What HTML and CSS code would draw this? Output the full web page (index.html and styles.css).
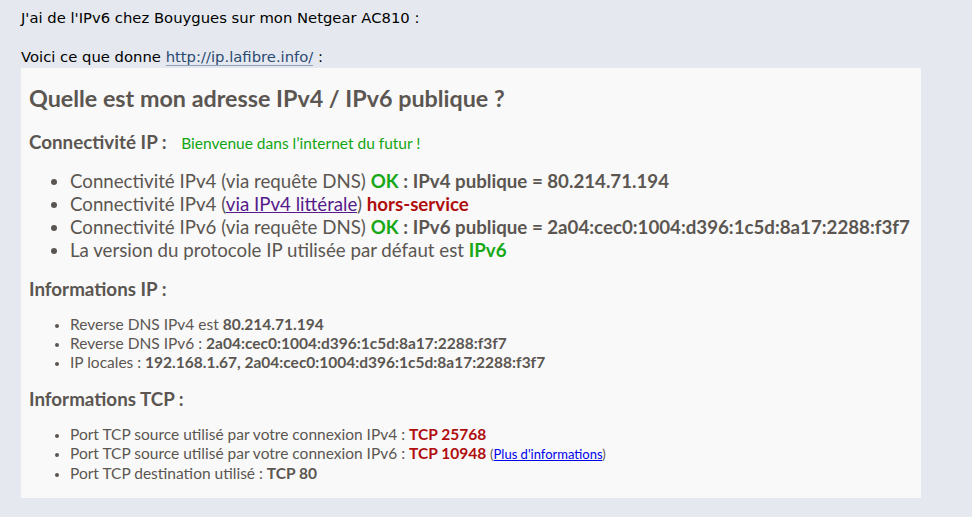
FILE: index.html
```html
<!DOCTYPE html>
<html lang="fr">
<head>
  <meta charset="UTF-8" />
  <title>IPv6 Bouygues</title>
  <link rel="stylesheet" href="styles.css">
</head>
<body>
  <div class="post">
    <p class="intro">J'ai de l'IPv6 chez Bouygues sur mon Netgear AC810 :</p>
    <p class="intro">Voici ce que donne <a class="site" href="#">http://ip.lafibre.info/</a> :</p>

    <!-- Quoted result page -->
    <div class="result">
      <h1>Quelle est mon adresse IPv4 / IPv6 publique ?</h1>

      <h2>Connectivité IP : <span class="welcome">Bienvenue dans l’internet du futur !</span></h2>
      <ul class="big-list">
        <li>Connectivité IPv4 (via requête DNS) <b class="ok">OK</b> <b>: IPv4 publique = 80.214.71.194</b></li>
        <li>Connectivité IPv4 (<a class="visited" href="#">via IPv4 littérale</a>) <b class="ko">hors-service</b></li>
        <li>Connectivité IPv6 (via requête DNS) <b class="ok">OK</b> <b>: IPv6 publique = 2a04:cec0:1004:d396:1c5d:8a17:2288:f3f7</b></li>
        <li>La version du protocole IP utilisée par défaut est <b class="ok">IPv6</b></li>
      </ul>

      <h2>Informations IP :</h2>
      <ul class="small-list">
        <li>Reverse DNS IPv4 est <b>80.214.71.194</b></li>
        <li>Reverse DNS IPv6 : <b>2a04:cec0:1004:d396:1c5d:8a17:2288:f3f7</b></li>
        <li>IP locales : <b>192.168.1.67, 2a04:cec0:1004:d396:1c5d:8a17:2288:f3f7</b></li>
      </ul>

      <h2>Informations TCP :</h2>
      <ul class="small-list">
        <li>Port TCP source utilisé par votre connexion IPv4 : <b class="ko">TCP 25768</b></li>
        <li>Port TCP source utilisé par votre connexion IPv6 : <b class="ko">TCP 10948</b> <span class="more">(<a href="#">Plus d'informations</a>)</span></li>
        <li>Port TCP destination utilisé : <b>TCP 80</b></li>
      </ul>
    </div>
  </div>
</body>
</html>
```

FILE: styles.css
```css
/* Base */
body {
  margin: 0;
  background: #e5e9ef;
  color: #000;
  font-family: "DejaVu Sans", Verdana, sans-serif;
  font-size: 14.8px;
}

.post {
  padding: 9px 51px 20px 21px;
}

.intro {
  margin: 0 0 21px;
  line-height: 18px;
}

.intro + .intro {
  margin-bottom: 2px;
}

.site {
  color: #2b4a72;
  text-decoration: none;
  border-bottom: 1px solid #8ea1bd;
}

/* Quoted result */
.result {
  background: #f9f9f9;
  padding: 15px 8px 15px;
  font-family: Lato, "Open Sans", sans-serif;
  color: #5b5651;
}

.result h1 {
  margin: 0 0 17px;
  font-size: 23.3px;
  font-weight: 700;
  line-height: 30px;
}

.result h2 {
  margin: 0;
  font-size: 18.8px;
  font-weight: 700;
  line-height: 24px;
}

.welcome {
  margin-left: 10px;
  font-size: 15.5px;
  font-weight: 400;
  color: #12a512;
}

.result b {
  font-weight: 700;
}

.ok {
  color: #17a817;
}

.ko {
  color: #b00d0d;
}

.big-list {
  margin: 15px 0 15px;
  padding-left: 41px;
  font-size: 18.7px;
  line-height: 23px;
}

.small-list {
  margin: 14px 0 15px;
  padding-left: 41px;
  font-size: 15.5px;
  line-height: 19px;
}

.small-list li::marker {
  font-size: 13px;
}

.small-list:last-child {
  margin-bottom: 0;
}

.visited {
  color: #551a8b;
}

.more {
  font-size: 13px;
}

.more a {
  color: #0000ee;
}
```
